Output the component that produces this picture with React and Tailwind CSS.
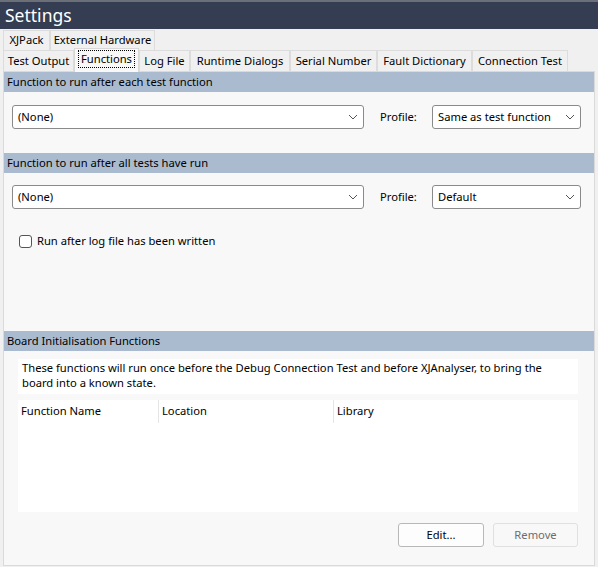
import React from 'react';

const font = { fontFamily: '"Segoe UI", "Noto Sans", "Open Sans", sans-serif' };

function Chevron() {
  return (
    <svg width="10" height="6" viewBox="0 0 10 6" className="shrink-0">
      <polyline points="1,1 5,5 9,1" fill="none" stroke="#555" strokeWidth="1" />
    </svg>
  );
}

function Combo({ value, className }) {
  return (
    <div className={`h-[24px] bg-white border border-[#8a8a8a] rounded-[3px] flex items-center justify-between pl-[5px] pr-[5px] ${className}`}>
      <span className="text-[11.2px] text-black leading-none">{value}</span>
      <Chevron />
    </div>
  );
}

function Header({ children }) {
  return (
    <div className="h-[20px] bg-[#aabbd0] flex items-center pl-[3px] text-[11.2px] text-black">
      {children}
    </div>
  );
}

const row1 = [
  ['XJPack', 'w-[47px]'],
  ['External Hardware', 'w-[105px]'],
];

const row2 = [
  ['Test Output', 'w-[71px]'],
  ['Functions', 'w-[65px]', true],
  ['Log File', 'w-[51px]'],
  ['Runtime Dialogs', 'w-[100px]'],
  ['Serial Number', 'w-[87px]'],
  ['Fault Dictionary', 'w-[95px]'],
  ['Connection Test', 'w-[96px]'],
];

function Tab({ label, width, active, tall }) {
  if (active) {
    return (
      <div className={`${width} h-[24px] -mt-[2px] -mb-[1px] relative z-10 bg-[#f8f8f8] border border-[#d8d8d8] border-b-0 flex items-start justify-center pt-[1px]`}>
        <span className="text-[11.2px] text-black px-[2px] border border-dotted border-black leading-[16px]">{label}</span>
      </div>
    );
  }
  return (
    <div className={`${width} ${tall ? 'h-[21px]' : 'h-[20px]'} bg-[#f0f0f0] border border-[#dcdcdc] border-b-0 flex items-center justify-center`}>
      <span className="text-[11.2px] text-black whitespace-nowrap">{label}</span>
    </div>
  );
}

export default function App() {
  return (
    <div style={font} className="w-[598px] h-[567px] bg-[#f0f0f0] flex flex-col overflow-hidden">
      {/* title bar */}
      <div className="h-[29px] bg-[#343d52] border-t-2 border-[#6b6f78] flex items-center pl-[5px]">
        <span className="text-white text-[17.5px] leading-none">Settings</span>
      </div>

      {/* tabs */}
      <div className="pl-[3px] pt-[1px] flex flex-col">
        <div className="flex">
          {row1.map(([l, w]) => <Tab key={l} label={l} width={w} />)}
        </div>
        <div className="flex">
          {row2.map(([l, w, a]) => <Tab key={l} label={l} width={w} active={a} tall />)}
        </div>
      </div>

      {/* panel */}
      <div className="mx-[3px] flex-1 mb-[1px] bg-[#f8f8f8] border border-[#dadada] flex flex-col">
        <Header>Function to run after each test function</Header>
        <div className="flex items-center mt-[13px] pl-[8px]">
          <Combo value="(None)" className="w-[352px]" />
          <span className="text-[11.2px] ml-[16px] w-[52px]">Profile:</span>
          <Combo value="Same as test function" className="w-[149px]" />
        </div>

        <div className="mt-[24px]">
          <Header>Function to run after all tests have run</Header>
        </div>
        <div className="flex items-center mt-[12px] pl-[8px]">
          <Combo value="(None)" className="w-[352px]" />
          <span className="text-[11.2px] ml-[16px] w-[52px]">Profile:</span>
          <Combo value="Default" className="w-[149px]" />
        </div>

        <label className="flex items-center mt-[24px] pl-[15px] gap-[5px] h-[17px]">
          <span className="w-[13px] h-[13px] bg-white border border-[#555] rounded-[3px]" />
          <span className="text-[11.2px] text-black">Run after log file has been written</span>
        </label>

        <div className="mt-[81px]">
          <Header>Board Initialisation Functions</Header>
        </div>

        <div className="mx-[14px] mt-[8px] h-[35px] bg-white px-[4px] pt-[1px] text-[11.2px] leading-[15px] text-black w-[560px]">
          These functions will run once before the Debug Connection Test and before XJAnalyser, to bring the board into a known state.
        </div>

        <div className="mx-[14px] mt-[6px] h-[112px] bg-white w-[560px]">
          <div className="flex h-[23px] text-[11.2px] text-black">
            <div className="w-[141px] pl-[3px] flex items-center border-r border-[#e5e5e5]">Function Name</div>
            <div className="w-[175px] pl-[3px] flex items-center border-r border-[#e5e5e5]">Location</div>
            <div className="pl-[3px] flex items-center">Library</div>
          </div>
        </div>

        <div className="flex justify-end gap-[9px] mt-[11px] pr-[16px]">
          <button className="w-[86px] h-[24px] bg-[#fdfdfd] border border-[#b8b8b8] rounded-[3px] text-[11.2px] text-black">Edit...</button>
          <button className="w-[85px] h-[24px] bg-[#f8f8f8] border border-[#e0e0e0] rounded-[3px] text-[11.2px] text-[#6d6d6d]">Remove</button>
        </div>
      </div>
    </div>
  );
}
